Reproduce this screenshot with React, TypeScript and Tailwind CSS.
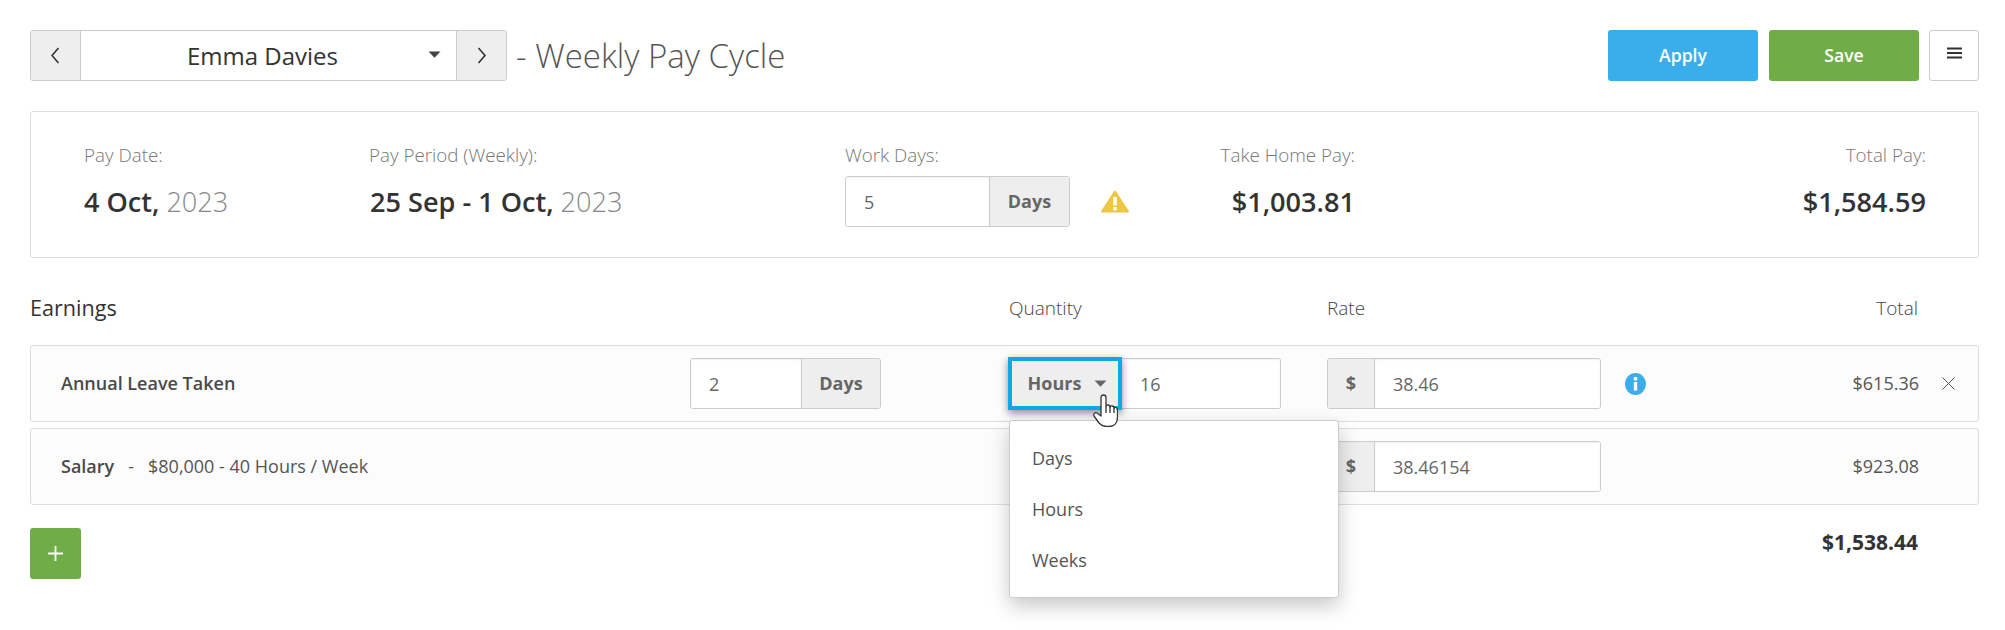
import React from "react";

const font = { fontFamily: '"Open Sans", sans-serif' };

function Caret({ className = "" }: { className?: string }) {
  return (
    <svg width="13" height="7" viewBox="0 0 13 7" className={className}>
      <path d="M0.5 0.5h12L6.5 6.8z" fill="currentColor" />
    </svg>
  );
}

function Chev({ dir }: { dir: "l" | "r" }) {
  return (
    <svg width="10" height="17" viewBox="0 0 10 17" fill="none" stroke="#333" strokeWidth="1.6">
      <path d={dir === "l" ? "M7.5 1 L1 8.5 L7.5 16" : "M1.5 1 L8 8.5 L1.5 16"} />
    </svg>
  );
}

function Addon({ children, className = "" }: { children: React.ReactNode; className?: string }) {
  return (
    <div className={`flex h-full items-center justify-center bg-[#eeeeee] font-bold text-[#666666] ${className}`}>
      {children}
    </div>
  );
}

function Field({ value, className = "" }: { value: string; className?: string }) {
  return (
    <input
      readOnly
      value={value}
      className={`h-full min-w-0 bg-white pl-[18px] text-[18px] text-[#666666] outline-none shadow-[inset_0_1px_2px_rgba(0,0,0,0.06)] ${className}`}
    />
  );
}

function Group({ children, className = "" }: { children: React.ReactNode; className?: string }) {
  return (
    <div className={`flex h-[51px] items-stretch overflow-hidden rounded-[3px] border border-[#cccccc] bg-white ${className}`}>
      {children}
    </div>
  );
}

function Info() {
  return (
    <svg width="21" height="22" viewBox="0 0 21 22">
      <ellipse cx="10.5" cy="11" rx="10.5" ry="11" fill="#3aaeea" />
      <circle cx="10.5" cy="5.7" r="2" fill="#fff" />
      <rect x="8.8" y="9" width="3.4" height="8.5" fill="#fff" />
    </svg>
  );
}

function Warning() {
  return (
    <svg width="28" height="23" viewBox="0 0 28 23">
      <path d="M14 1.5 L27 21.5 H1 Z" fill="#eec643" stroke="#eec643" strokeWidth="2" strokeLinejoin="round" />
      <rect x="12.2" y="7" width="3.6" height="8.5" fill="#fff" />
      <rect x="12.2" y="17" width="3.6" height="3.4" fill="#fff" />
    </svg>
  );
}

function Hand() {
  return (
    <svg width="26" height="33" viewBox="0 0 26 33" fill="#fff" stroke="#333" strokeWidth="1.3" strokeLinejoin="round" className="absolute left-[1092px] top-[394px]">
      <path d="M9 3.5C9 2 10 1 11.5 1C13 1 14 2 14 3.5V12C14.5 10.5 18 10.5 18 13C18.5 11.5 22 11.5 22 14C22.5 13 25.5 13 25.5 16V23C25.5 29 22 32.5 17 32.5H14C11 32.5 9 31 7 29L2 22C1 20 3 18 5 19L9 22Z" />
      <path d="M14 12V19M18 13V19M22 14V19" fill="none" />
    </svg>
  );
}

function Row({ children }: { children: React.ReactNode }) {
  return (
    <div className="flex h-[77px] items-center rounded-[3px] border border-[#dddddd] bg-[#fcfcfc]">
      {children}
    </div>
  );
}

function Stat({ label, className = "", children }: { label: string; className?: string; children: React.ReactNode }) {
  return (
    <div className={`flex flex-col ${className}`}>
      <div className="h-[30px] whitespace-nowrap text-[18.8px] font-light leading-[30px] text-[#777777]">{label}</div>
      <div className="mt-[12px] flex h-[40px] items-center whitespace-nowrap text-[27.1px] font-semibold text-[#333333]">{children}</div>
    </div>
  );
}

export default function App() {
  return (
    <div style={font} className="relative h-[630px] w-[2005px] overflow-hidden bg-white pl-[30px] pr-[26px] pt-[30px] text-[#333333]">
      <div className="flex h-[51px] items-center">
        <div className="flex h-[51px] w-[477px] items-stretch overflow-hidden rounded-[3px] border border-[#cccccc]">
          <div className="flex w-[50px] items-center justify-center border-r border-[#cccccc] bg-[#eeeeee]">
            <Chev dir="l" />
          </div>
          <div className="relative flex flex-1 items-center justify-center pr-[12px] text-[24px] text-[#333333]">
            Emma Davies
            <Caret className="absolute right-[15px] top-[20px] text-[#444444]" />
          </div>
          <div className="flex w-[50px] items-center justify-center border-l border-[#cccccc] bg-[#eeeeee]">
            <Chev dir="r" />
          </div>
        </div>
        <div className="ml-[9px] text-[33px] font-light text-[#555555]">- Weekly Pay Cycle</div>
        <div className="ml-auto flex h-full">
          <button className="mr-[11px] w-[150px] rounded-[3px] bg-[#3aaeea] text-[17.6px] font-semibold text-white">Apply</button>
          <button className="mr-[10px] w-[150px] rounded-[3px] bg-[#70ad47] text-[17.6px] font-semibold text-white">Save</button>
          <button className="flex w-[50px] items-start justify-center rounded-[3px] border border-[#cccccc] bg-white pt-[16px]">
            <svg width="15" height="12" viewBox="0 0 15 12" stroke="#333" strokeWidth="1.8">
              <path d="M0 1.5H15M0 6H15M0 10.5H15" />
            </svg>
          </button>
        </div>
      </div>

      <div className="mt-[30px] flex h-[147px] items-start rounded-[3px] border border-[#dddddd] pl-[53px] pr-[52px] pt-[28px]">
        <Stat label="Pay Date:" className="w-[285px]">
          <span>4 Oct,</span>
          <span className="ml-[7px] font-light text-[#888888]">2023</span>
        </Stat>
        <Stat label="Pay Period (Weekly):" className="w-[476px]">
          <span className="ml-[1px]">25 Sep - 1 Oct,</span>
          <span className="ml-[7px] font-light text-[#888888]">2023</span>
        </Stat>
        <div className="flex w-[376px] flex-col">
          <div className="h-[30px] text-[18.8px] font-light leading-[30px] text-[#777777]">Work Days:</div>
          <div className="mt-[6px] flex items-center">
            <Group className="w-[225px]">
              <Field value="5" className="w-[143px]" />
              <Addon className="flex-1 border-l border-[#cccccc] text-[18px]">Days</Addon>
            </Group>
            <div className="ml-[31px]">
              <Warning />
            </div>
          </div>
        </div>
        <Stat label="Take Home Pay:" className="w-[134px] items-end">
          <span>$1,003.81</span>
        </Stat>
        <Stat label="Total Pay:" className="ml-auto items-end">
          <span>$1,584.59</span>
        </Stat>
      </div>

      <div className="mt-[33px] flex h-[34px] items-center text-[19px]">
        <div className="w-[979px] text-[21.6px] font-normal text-[#333333]">Earnings</div>
        <div className="w-[318px] font-light text-[#444444]">Quantity</div>
        <div className="font-light text-[#444444]">Rate</div>
        <div className="ml-auto mr-[61px] font-light text-[#444444]">Total</div>
      </div>

      <div className="mt-[20px] flex flex-col gap-[6px] text-[18px]">
        <Row>
          <div className="w-[659px] pl-[30px] font-semibold text-[#4a4a4a]">Annual Leave Taken</div>
          <Group className="w-[191px]">
            <Field value="2" className="w-[110px]" />
            <Addon className="flex-1 border-l border-[#cccccc]">Days</Addon>
          </Group>
          <div className="ml-[127px] flex h-[53px] w-[273px] items-center">
            <div className="relative z-10 flex h-[53px] w-[114px] items-center justify-center gap-[13px] border-[4px] border-[#0ba9e6] bg-[#eeeeee] pl-[5px] font-bold text-[#666666] shadow-[0_3px_8px_rgba(0,0,0,0.45)]">
              Hours
              <Caret className="text-[#666666]" />
            </div>
            <div className="flex h-[51px] flex-1 rounded-r-[3px] border border-l-0 border-[#cccccc] bg-white">
              <Field value="16" className="w-full" />
            </div>
          </div>
          <Group className="ml-[46px] w-[274px]">
            <Addon className="w-[47px] border-r border-[#cccccc]">$</Addon>
            <Field value="38.46" className="flex-1" />
          </Group>
          <div className="ml-[24px] flex w-[21px]">
            <Info />
          </div>
          <div className="ml-auto text-[#555555]">$615.36</div>
          <div className="ml-[23px] mr-[23px] flex">
            <svg width="13" height="13" viewBox="0 0 13 13" stroke="#555" strokeWidth="1">
              <path d="M0.5 0.5L12.5 12.5M12.5 0.5L0.5 12.5" />
            </svg>
          </div>
        </Row>
        <Row>
          <div className="w-[977px] pl-[30px] text-[#555555]">
            <span className="font-semibold text-[#4a4a4a]">Salary</span>
            <span className="mx-[14px]">-</span>
            <span>$80,000 - 40 Hours / Week</span>
          </div>
          <Group className="ml-[319px] w-[274px]">
            <Addon className="w-[47px] border-r border-[#cccccc]">$</Addon>
            <Field value="38.46154" className="flex-1" />
          </Group>
          <div className="ml-auto mr-[59px] text-[#555555]">$923.08</div>
        </Row>
      </div>

      <div className="mt-[23px] flex items-start">
        <button className="flex h-[51px] w-[51px] items-center justify-center rounded-[3px] bg-[#70ad47]">
          <svg width="15" height="15" viewBox="0 0 15 15" stroke="#fff" strokeWidth="1.8">
            <path d="M7.5 0V15M0 7.5H15" />
          </svg>
        </button>
        <div className="ml-auto mr-[61px] mt-[-1px] text-[21px] font-bold text-[#333333]">$1,538.44</div>
      </div>

      <div className="absolute left-[1009px] top-[420px] z-20 flex h-[178px] w-[330px] flex-col justify-center rounded-[3px] border border-[#cccccc] bg-white pl-[22px] text-[18px] text-[#555555] shadow-[0_8px_20px_rgba(0,0,0,0.22)]">
        <div className="flex h-[51px] items-center">Days</div>
        <div className="flex h-[51px] items-center">Hours</div>
        <div className="flex h-[51px] items-center">Weeks</div>
      </div>
      <div className="absolute z-30 left-0 top-0">
        <Hand />
      </div>
    </div>
  );
}
